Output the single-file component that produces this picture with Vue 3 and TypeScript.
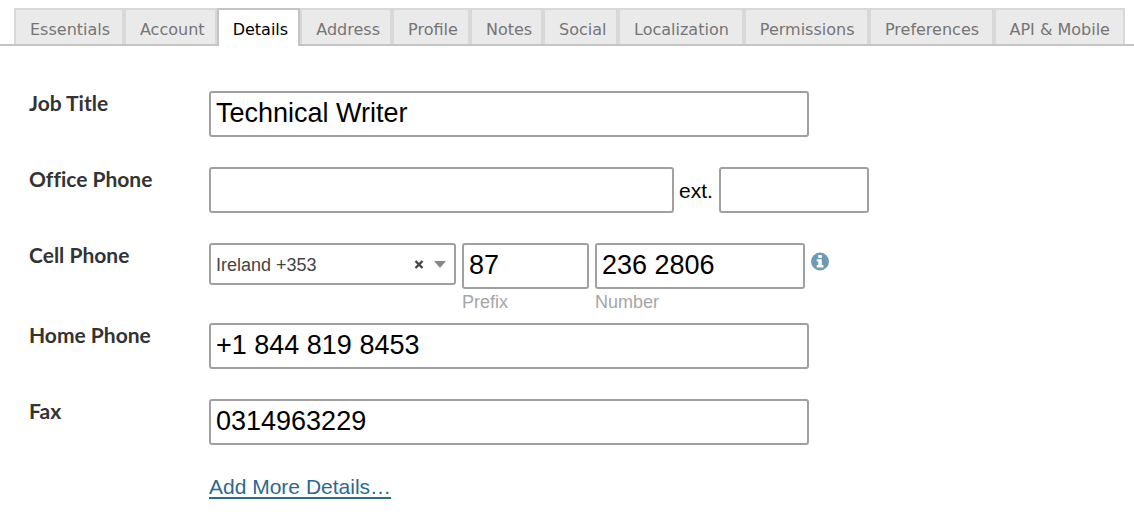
<script setup lang="ts">
import { ref } from 'vue'

const tabs: string[] = [
  'Essentials', 'Account', 'Details', 'Address', 'Profile', 'Notes',
  'Social', 'Localization', 'Permissions', 'Preferences', 'API & Mobile',
]
const activeTab = ref('Details')

const jobTitle = ref('Technical Writer')
const officePhone = ref('')
const extension = ref('')
const country = ref('Ireland +353')
const prefix = ref('87')
const cellNumber = ref('236 2806')
const homePhone = ref('+1 844 819 8453')
const fax = ref('0314963229')
</script>

<template>
  <main class="page">
    <nav class="tabs" role="tablist">
      <button
        v-for="tab in tabs"
        :key="tab"
        type="button"
        role="tab"
        class="tab"
        :class="{ active: tab === activeTab }"
        :style="{ flexGrow: tab.length }"
        :aria-selected="tab === activeTab"
        @click="activeTab = tab"
      >{{ tab }}</button>
    </nav>

    <form class="form" @submit.prevent>
      <div class="row">
        <label class="label" for="job">Job Title</label>
        <div class="fields"><input id="job" v-model="jobTitle" class="box full" type="text"></div>
      </div>

      <div class="row">
        <label class="label" for="office">Office Phone</label>
        <div class="fields">
          <input id="office" v-model="officePhone" class="box office" type="text">
          <label class="ext" for="ext">ext.</label>
          <input id="ext" v-model="extension" class="box extension" type="text">
        </div>
      </div>

      <div class="row cell">
        <label class="label" for="country">Cell Phone</label>
        <div class="fields top">
          <div class="country">
            <select id="country" v-model="country" class="select">
              <option value=""></option>
              <option>Ireland +353</option>
            </select>
            <button type="button" class="clear" aria-label="Clear" @click="country = ''">
              <svg width="10" height="10" viewBox="0 0 10 10"><path d="M1.5 1 8.5 8M8.5 1 1.5 8" stroke="#444" stroke-width="2.4" /></svg>
            </button>
            <svg class="arrow" width="12" height="7" viewBox="0 0 12 7"><path d="M0 0H12L6 7Z" fill="#888" /></svg>
          </div>
          <div class="stack prefix">
            <input id="prefix" v-model="prefix" class="box full" type="text">
            <label class="hint" for="prefix">Prefix</label>
          </div>
          <div class="stack number">
            <input id="number" v-model="cellNumber" class="box full" type="text">
            <label class="hint" for="number">Number</label>
          </div>
          <svg class="info" width="18" height="19" viewBox="0 0 18 19" role="img" aria-label="Information">
            <circle cx="9" cy="9.5" r="9" fill="#6f9ab5" />
            <path d="M7.3 3H10.8V6H7.3ZM5.8 7.3H10.8V13H12.4V15.4H5.8V13H7.3V9.6H5.8Z" fill="#fff" />
          </svg>
        </div>
      </div>

      <div class="row">
        <label class="label" for="home">Home Phone</label>
        <div class="fields"><input id="home" v-model="homePhone" class="box full" type="text"></div>
      </div>

      <div class="row">
        <label class="label" for="fax">Fax</label>
        <div class="fields"><input id="fax" v-model="fax" class="box full" type="text"></div>
      </div>

      <div class="row">
        <a class="more" href="#">Add More Details…</a>
      </div>
    </form>
  </main>
</template>

<style>
body {
  margin: 0;
  background: #fff;
}
</style>

<style scoped>
.page {
  padding-top: 8px;
  font-family: "Liberation Sans", Arial, sans-serif;
  color: #000;
}

.page * {
  box-sizing: border-box;
}

.tabs {
  display: flex;
  padding: 0 9px 0 14px;
  border-bottom: 2px solid #c4c4c4;
}

.tab {
  flex: 1 0 auto;
  height: 36px;
  margin: 0;
  padding: 5px 6px 0 14px;
  border: 2px solid #d8d8d8;
  border-bottom: 0;
  border-radius: 0;
  background: #eaeaea;
  color: #757575;
  font-family: "DejaVu Sans", Verdana, sans-serif;
  font-size: 16px;
  line-height: 20px;
  text-align: left;
  white-space: nowrap;
  cursor: pointer;
}

.tab.active {
  height: 38px;
  margin-bottom: -2px;
  padding-bottom: 2px;
  border-color: #c4c4c4;
  background: #fff;
  color: #000;
}

.form {
  display: flex;
  flex-direction: column;
  gap: 30px;
  padding: 45px 28px 14px 29px;
}

.row {
  display: grid;
  grid-template-columns: 180px minmax(0, 1fr);
  align-items: start;
}

.cell {
  margin-bottom: -20px;
}

.label {
  color: #333;
  font-family: Lato, "Open Sans", sans-serif;
  font-size: 21px;
  font-weight: 700;
  font-variant-ligatures: none;
  line-height: 24px;
}

.fields {
  display: flex;
  align-items: center;
  max-width: 660px;
}

.fields.top {
  align-items: flex-start;
  gap: 6px;
}

.box {
  height: 46px;
  min-width: 0;
  margin: 0;
  padding: 0 5px 1px;
  border: 2px solid #a0a0a0;
  border-radius: 3px;
  background: #fff;
  color: #000;
  font-family: inherit;
  font-size: 27px;
}

.full {
  width: 100%;
  max-width: 600px;
}

.office {
  flex: 0 1 465px;
}

.ext {
  padding: 2px 6px 0 5px;
  font-size: 21px;
  line-height: 24px;
}

.extension {
  flex: 0 1 150px;
}

.country {
  position: relative;
  flex: 0 1 247px;
}

.select {
  display: block;
  width: 100%;
  height: 42px;
  padding: 2px 40px 0 5px;
  border: 2px solid #a0a0a0;
  border-radius: 3px;
  background: #fff;
  color: #444;
  font-family: inherit;
  font-size: 18px;
  appearance: none;
}

.clear {
  position: absolute;
  top: 17px;
  right: 32px;
  width: 10px;
  height: 10px;
  padding: 0;
  border: 0;
  background: none;
  cursor: pointer;
}

.clear svg {
  display: block;
}

.arrow {
  position: absolute;
  top: 18px;
  right: 10px;
  pointer-events: none;
}

.stack {
  display: flex;
  flex-direction: column;
}

.prefix {
  flex: 0 1 127px;
}

.number {
  flex: 0 1 210px;
}

.hint {
  margin-top: 3px;
  color: #a6a6a6;
  font-size: 18px;
  line-height: 21px;
}

.info {
  flex: none;
  margin-top: 9px;
}

.more {
  grid-column: 2;
  justify-self: start;
  color: #2b6a8f;
  font-size: 21px;
  line-height: 24px;
  text-underline-offset: 3px;
}
</style>
